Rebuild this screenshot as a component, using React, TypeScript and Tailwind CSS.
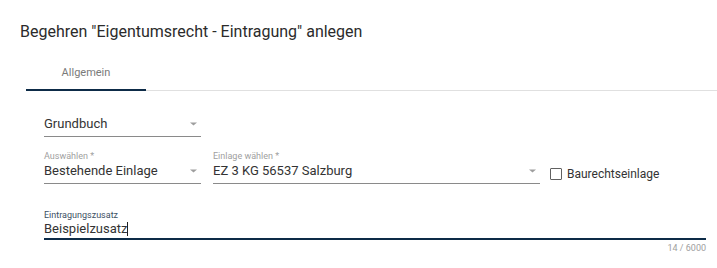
import React from "react";

function Caret() {
  return (
    <svg width="7" height="4" viewBox="0 0 7 4" className="shrink-0">
      <path d="M0 0.5 L7 0.5 L3.5 3.5 Z" fill="#9e9e9e" />
    </svg>
  );
}

function SelectField({
  label,
  value,
  width,
}: {
  label?: string;
  value: string;
  width: string;
}) {
  return (
    <div className={`flex flex-col ${width}`}>
      {label ? (
        <span className="text-[9px] leading-[11px] text-[#a0a0a0]">{label}</span>
      ) : null}
      <div className="flex items-center justify-between border-b border-[#8a8a8a] pb-[3px] pr-[4px]">
        <span className="text-[13px] leading-[18px] text-[#333333]">{value}</span>
        <Caret />
      </div>
    </div>
  );
}

export default function App() {
  return (
    <div
      className="w-[717px] h-[268px] bg-white overflow-hidden"
      style={{ fontFamily: "Roboto, 'Liberation Sans', sans-serif" }}
    >
      <h1 className="pt-[22px] pl-[20px] text-[16px] leading-[20px] text-[#2b2b2b] font-normal">
        Begehren "Eigentumsrecht - Eintragung" anlegen
      </h1>

      {/* tabs */}
      <div className="ml-[26px] mt-[19px] flex border-b border-[#e0e0e0]">
        <div className="w-[120px] h-[30px] flex items-start justify-center border-b-2 border-[#0d2b47] -mb-px">
          <span className="text-[11px] leading-[14px] text-[#7a7a7a] pt-[5px]">Allgemein</span>
        </div>
      </div>

      {/* form */}
      <div className="pl-[44px] pr-[11px] pt-[24px] flex flex-col">
        <SelectField value="Grundbuch" width="w-[157px]" />

        <div className="flex items-end mt-[14px]">
          <SelectField label="Auswählen *" value="Bestehende Einlage" width="w-[157px]" />
          <div className="ml-[12px]">
            <SelectField label="Einlage wählen *" value="EZ 3 KG 56537 Salzburg" width="w-[327px]" />
          </div>
          <label className="ml-[10px] mb-[2px] flex items-center gap-[5px]">
            <span className="w-[12px] h-[12px] border border-[#616161] rounded-[1px] bg-white" />
            <span className="text-[12px] leading-[16px] text-[#333333]">Baurechtseinlage</span>
          </label>
        </div>

        <div className="flex flex-col mt-[26px]">
          <span className="text-[9px] leading-[10px] text-[#3c4f63]">Eintragungszusatz</span>
          <div className="border-b-2 border-[#0d2b47] pb-[1px] leading-[16px]">
            <span className="text-[13px] leading-[16px] text-[#333333]">Beispielzusatz</span>
            <span className="inline-block w-px h-[14px] bg-[#212121] align-[-3px]" />
          </div>
          <span className="self-end mt-[3px] text-[9px] leading-[11px] text-[#9e9e9e]">14 / 6000</span>
        </div>
      </div>
    </div>
  );
}
